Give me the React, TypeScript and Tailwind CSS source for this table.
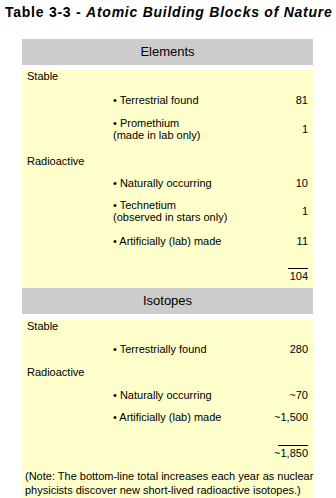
import React from "react";

type Item = {
  kind: "label" | "item";
  text: string;
  sub?: string;
  value?: string;
  mt: string;
};

const ELEMENTS: Item[] = [
  { kind: "label", text: "Stable", mt: "mt-[5px]" },
  { kind: "item", text: "Terrestrial found", value: "81", mt: "mt-[12px]" },
  { kind: "item", text: "Promethium", sub: "(made in lab only)", value: "1", mt: "mt-[11px]" },
  { kind: "label", text: "Radioactive", mt: "mt-[14px]" },
  { kind: "item", text: "Naturally occurring", value: "10", mt: "mt-[10px]" },
  { kind: "item", text: "Technetium", sub: "(observed in stars only)", value: "1", mt: "mt-[10px]" },
  { kind: "item", text: "Artificially (lab) made", value: "11", mt: "mt-[12px]" },
];

const ISOTOPES: Item[] = [
  { kind: "label", text: "Stable", mt: "mt-[6px]" },
  { kind: "item", text: "Terrestrially found", value: "280", mt: "mt-[11px]" },
  { kind: "label", text: "Radioactive", mt: "mt-[11px]" },
  { kind: "item", text: "Naturally occurring", value: "~70", mt: "mt-[11px]" },
  { kind: "item", text: "Artificially (lab) made", value: "~1,500", mt: "mt-[10px]" },
];

function SectionHeader({ title }: { title: string }) {
  return (
    <div className="h-[26px] bg-[#cccccc] flex items-center justify-center text-[13px] leading-[16px] text-black">
      {title}
    </div>
  );
}

function Row({ item }: { item: Item }) {
  if (item.kind === "label") {
    return <div className={`${item.mt} pl-[5px] leading-[12px]`}>{item.text}</div>;
  }
  return (
    <div className={`${item.mt} flex items-center pr-[5px] leading-[12px]`}>
      <div className="ml-[91px] flex-1">
        <div>• {item.text}</div>
        {item.sub && <div>{item.sub}</div>}
      </div>
      <div className="text-right">{item.value}</div>
    </div>
  );
}

function Total({ value, lineW, mt }: { value: string; lineW: string; mt: string }) {
  return (
    <div className={`${mt} flex justify-end pr-[5px]`}>
      <div className="flex flex-col items-end">
        <div className={`${lineW} border-t border-black`} />
        <div className="pt-[1px] leading-[12px]">{value}</div>
      </div>
    </div>
  );
}

export default function App() {
  return (
    <div className="w-[336px] h-[498px] bg-white font-['Liberation_Sans',Arial,sans-serif] text-black overflow-hidden">
      <h1 className="mt-[4px] pl-[5px] text-[14px] leading-[16px] font-bold tracking-[0.75px] whitespace-nowrap">
        Table 3-3 - <i>Atomic Building Blocks of Nature</i>
      </h1>

      <div className="mt-[19px] ml-[22px] w-[291px] text-[11px]">
        <SectionHeader title="Elements" />
        <div className="bg-[#ffffcc] pb-[6px]">
          {ELEMENTS.map((it, i) => (
            <Row key={i} item={it} />
          ))}
          <Total value="104" lineW="w-[20px]" mt="mt-[21px]" />
        </div>

        <SectionHeader title="Isotopes" />
        <div className="bg-[#ffffcc] pb-[6px]">
          {ISOTOPES.map((it, i) => (
            <Row key={i} item={it} />
          ))}
          <Total value="~1,850" lineW="w-[30px]" mt="mt-[22px]" />
          <p className="mt-[10px] pl-[3px] leading-[14px] whitespace-nowrap">
            (Note: The bottom-line total increases each year as nuclear
            <br />
            physicists discover new short-lived radioactive isotopes.)
          </p>
        </div>
      </div>
    </div>
  );
}
